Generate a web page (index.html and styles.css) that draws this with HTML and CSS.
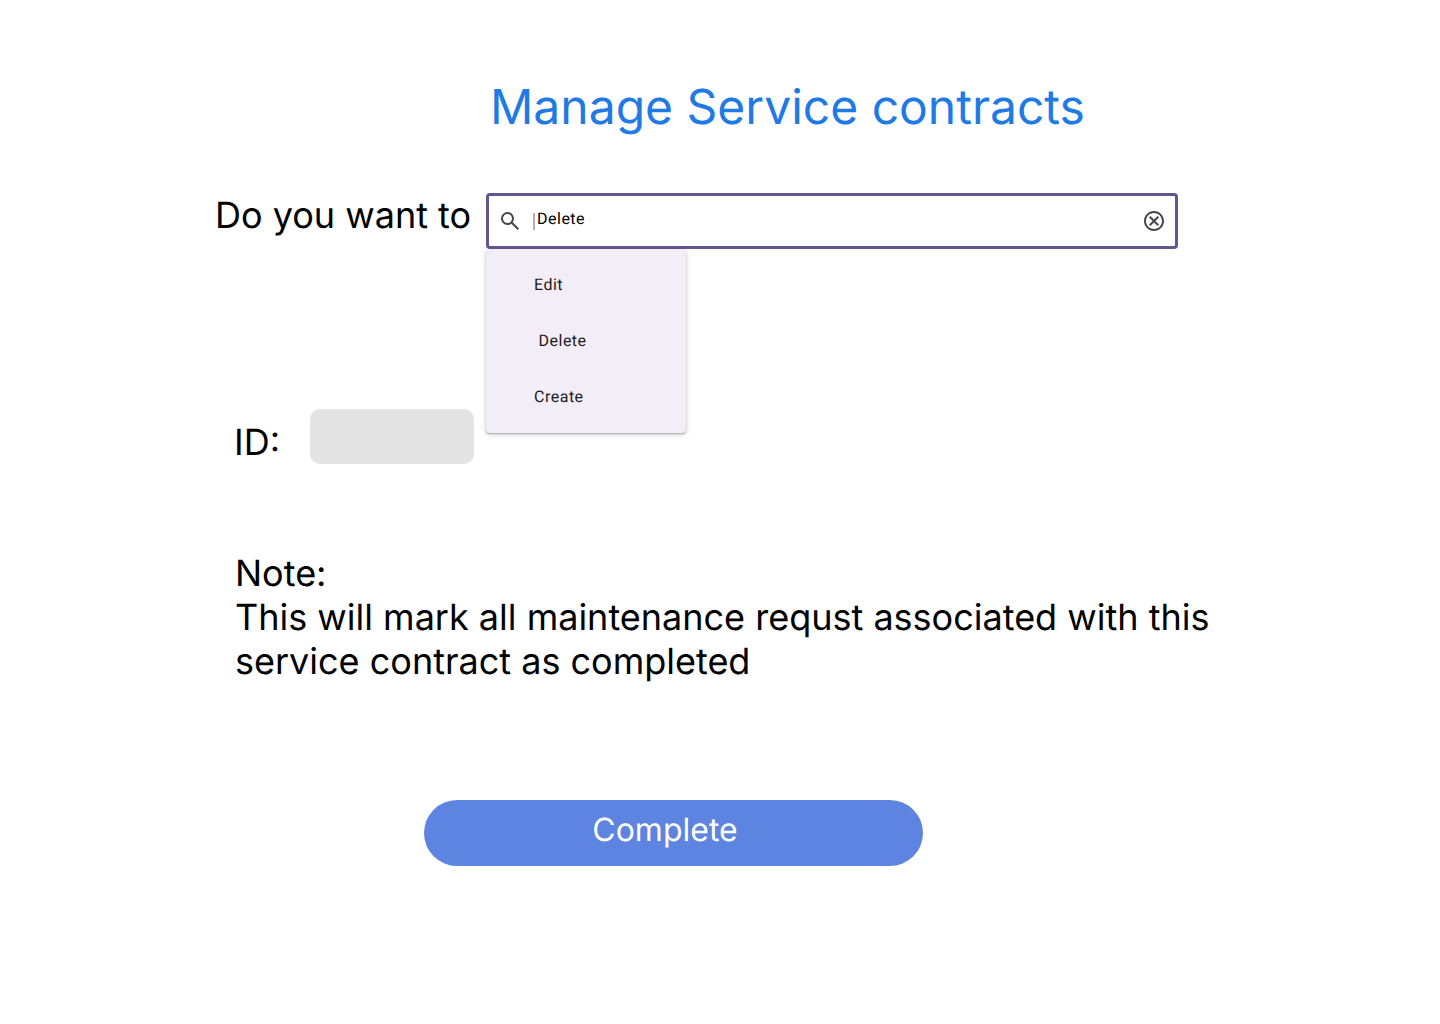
FILE: index.html
```html
<!DOCTYPE html>
<html lang="en">
<head>
<meta charset="utf-8">
<title>Manage Service contracts</title>
<link rel="stylesheet" href="styles.css">
</head>
<body>
<main class="page">
  <h1 class="title">Manage Service contracts</h1>
  <section class="action-row">
    <span class="action-label">Do you want to</span>
    <div class="combo">
      <div class="search">
        <svg class="icon" viewBox="0 0 24 24"><path d="M19.6 21l-6.3-6.3A6.1 6.1 0 0 1 9.5 16 6.5 6.5 0 1 1 16 9.5a6.1 6.1 0 0 1-1.3 3.8l6.3 6.3-1.4 1.4zM9.5 14A4.5 4.5 0 1 0 5 9.5 4.5 4.5 0 0 0 9.5 14z"/></svg>
        <span class="caret"></span>
        <span class="value">Delete</span>
        <svg class="icon clear" viewBox="0 0 24 24"><path d="M8.4 17l3.6-3.6 3.6 3.6 1.4-1.4-3.6-3.6L17 8.4 15.6 7 12 10.6 8.4 7 7 8.4l3.6 3.6L7 15.6 8.4 17zM12 2C6.47 2 2 6.47 2 12s4.47 10 10 10 10-4.47 10-10S17.53 2 12 2zm0 18c-4.41 0-8-3.59-8-8s3.59-8 8-8 8 3.59 8 8-3.59 8-8 8z"/></svg>
      </div>
      <ul class="menu">
        <li class="option">Edit</li>
        <li class="option option-selected">Delete</li>
        <li class="option">Create</li>
      </ul>
    </div>
  </section>
  <section class="id-row">
    <span class="id-label">ID:</span>
    <div class="id-field"></div>
  </section>
  <p class="note">Note:<br>This will mark all maintenance requst associated with this<br>service contract as completed</p>
  <button class="complete" type="button">Complete</button>
</main>
</body>
</html>
```

FILE: styles.css
```css
* { box-sizing: border-box; }
body { margin: 0; background: #fff; color: #000; font-family: Inter, sans-serif; text-rendering: geometricPrecision; }
.page { display: flex; flex-direction: column; align-items: flex-start; width: 1440px; height: 1024px; padding-top: 78px; }
.title { margin: 0 0 0 490px; font-size: 48px; line-height: 58px; font-weight: 400; color: #1f7ae5; white-space: nowrap; }
.action-row { display: flex; align-items: flex-start; height: 56px; margin: 57px 0 0 215px; }
.action-label { width: 271px; font-size: 36px; line-height: 44px; white-space: nowrap; }
.combo { position: relative; width: 692px; }
.search { display: flex; align-items: center; height: 56px; padding: 0 9px; border: 3px solid #65558f; border-radius: 4px; }
.icon { flex: none; width: 24px; height: 24px; fill: #49454f; }
.caret { width: 2px; height: 17px; margin-left: 11px; background: #b5abcc; }
.value { margin: -5px auto 0 2px; font: 400 16px/24px Roboto, sans-serif; letter-spacing: .5px; }
.menu { position: absolute; top: 56px; left: 0; width: 200px; height: 184px; margin: 0; padding: 8px 0 0; list-style: none; background: #f3edf7; border-radius: 4px; box-shadow: 0 1px 2px rgba(0,0,0,.3), 0 2px 6px rgba(0,0,0,.12); }
.option { height: 56px; padding-left: 48px; font: 400 16px/56px Roboto, sans-serif; letter-spacing: .5px; color: #1d1b20; }
.option-selected { padding-left: 52.5px; }
.id-row { display: flex; height: 55px; margin: 160px 0 0 234px; }
.id-label { width: 76px; padding-top: 11px; font-size: 36px; line-height: 44px; }
.id-field { width: 164px; height: 55px; border-radius: 10px; background: #e4e4e4; }
.note { margin: 87px 0 0 235px; font-size: 36px; line-height: 44px; white-space: nowrap; }
.complete { width: 499px; height: 66px; margin: 117px 0 0 424px; padding: 0 17px 7px 0; border: 0; border-radius: 33px; background: #5c84e0; color: #fff; font: 400 32px/39px Inter, sans-serif; text-align: center; text-rendering: geometricPrecision; }
```
